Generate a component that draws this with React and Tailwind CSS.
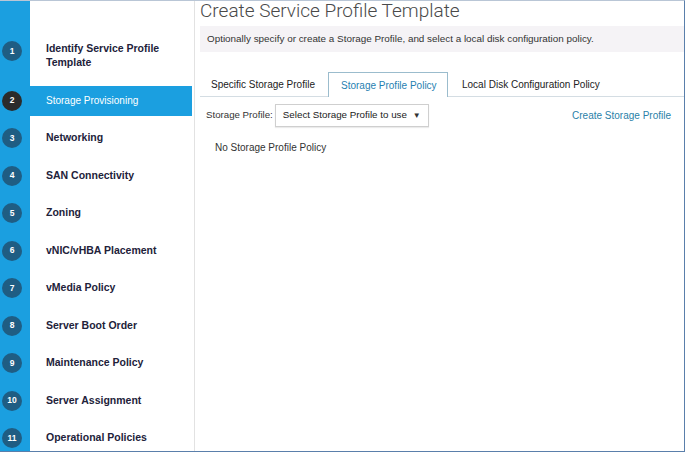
import React from "react";

const steps = [
  "Storage Provisioning",
  "Networking",
  "SAN Connectivity",
  "Zoning",
  "vNIC/vHBA Placement",
  "vMedia Policy",
  "Server Boot Order",
  "Maintenance Policy",
  "Server Assignment",
  "Operational Policies",
];

function Circle({ n, active, extra = "" }) {
  return (
    <div className="w-[24px] flex justify-center shrink-0">
      <div
        className={
          "w-[20px] h-[20px] rounded-full flex items-center justify-center text-white text-[8.5px] font-bold " +
          (active ? "bg-[#2b2b2b] " : "bg-[#1f5d83] ") +
          extra
        }
      >
        {n}
      </div>
    </div>
  );
}

export default function App() {
  return (
    <div className="w-[685px] h-[452px] flex bg-white overflow-hidden border-t border-r border-b border-t-[#b9c6d6] border-r-[#5a7fab] border-b-[#5a7fab] font-['Liberation_Sans',Arial,sans-serif]">
      {/* Sidebar */}
      <div className="w-[192px] shrink-0 flex flex-col border-l-[30px] border-[#1b9fe0] bg-white">
        <div className="h-[27px] shrink-0" />
        <div className="-ml-[30px] flex items-center h-[54px] shrink-0">
          <Circle n={1} extra="mb-[8px]" />
          <div className="ml-[6px] pl-[16px] text-[10.5px] font-bold leading-[14px] text-[#22223a]">
            Identify Service Profile
            <br />
            Template
          </div>
        </div>
        {steps.map((s, i) => {
          const active = i === 0;
          return (
            <div key={s} className="-ml-[30px] flex items-center h-[37.5px] shrink-0">
              <Circle n={i + 2} active={active} />
              <div
                className={
                  "ml-[6px] flex-1 h-[30px] flex items-center pl-[16px] whitespace-nowrap " +
                  (active
                    ? "bg-[#1b9fe0] text-white text-[10px]"
                    : "text-[#22223a] text-[10.5px] font-bold")
                }
              >
                {s}
              </div>
            </div>
          );
        })}
      </div>

      {/* Content */}
      <div className="flex-1 ml-[2px] border-l border-[#e2e2e2] pl-[5px] flex flex-col">
        <div className="-mt-[2px] h-[25px] text-[19px] leading-[24px] font-light text-[#4a4a4a] font-['Roboto',Arial,sans-serif] whitespace-nowrap">
          Create Service Profile Template
        </div>
        <div className="mt-[2px] h-[26px] bg-[#f5f3f6] flex items-center px-[7px] text-[9.9px] text-[#333] whitespace-nowrap">
          Optionally specify or create a Storage Profile, and select a local disk configuration policy.
        </div>
        <div className="mt-[20px] flex border-b border-[#d4dde3] h-[25px] text-[10px]">
          <div className="w-[128px] flex items-center pl-[11px] text-[#222]">
            Specific Storage Profile
          </div>
          <div className="w-[120px] -mb-px h-[25px] flex items-center pl-[12px] bg-white border border-b-0 border-[#9bbccd] text-[#1f7fb1]">
            Storage Profile Policy
          </div>
          <div className="flex items-center pl-[14px] text-[#222]">
            Local Disk Configuration Policy
          </div>
        </div>
        <div className="mt-[7px] flex items-center h-[23px] text-[10px] pl-[6px] pr-[13px] whitespace-nowrap">
          <span className="text-[#333] text-[9.7px]">Storage Profile:</span>
          <div className="ml-[2px] w-[154px] h-[23px] border border-[#cfcfcf] shadow-[0_1px_1px_rgba(0,0,0,0.08)] flex items-center justify-between pl-[7px] pr-[7px] text-[#222] text-[9.8px]">
            <span>Select Storage Profile to use</span>
            <span className="text-[8px] text-[#333]">▼</span>
          </div>
          <div className="flex-1" />
          <span className="text-[#2a7fa8]">Create Storage Profile</span>
        </div>
        <div className="mt-[13px] pl-[15px] text-[10px] text-[#333]">
          No Storage Profile Policy
        </div>
      </div>
    </div>
  );
}
